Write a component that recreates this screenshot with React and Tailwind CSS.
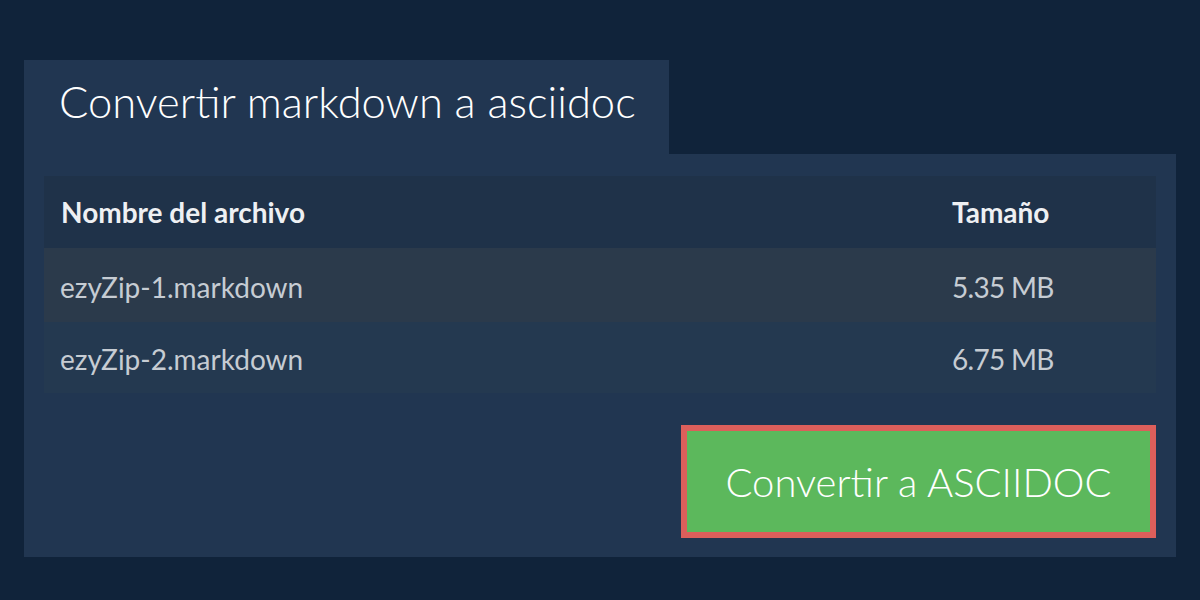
export default function App() {
  const files = [
    { name: 'ezyZip-1.markdown', size: '5.35 MB' },
    { name: 'ezyZip-2.markdown', size: '6.75 MB' },
  ];

  return (
    <div className="w-[1200px] h-[600px] bg-[#10233a] px-6 pt-[60px] font-['Lato','Liberation_Sans',sans-serif]">
      {/* Pestaña */}
      <div className="w-[645px] h-[94px] bg-[#213651] pl-[35px] pt-[11px]">
        <h1 className="text-[43.5px] font-light text-white leading-[60px]">
          Convertir markdown a asciidoc
        </h1>
      </div>

      {/* Panel */}
      <div className="w-[1152px] bg-[#213651] px-5 pt-[22px] pb-[19px]">
        <div className="w-full">
          <div className="flex h-[72px] items-center bg-[#1f3249] text-[28px] font-bold text-[#eef0f3]">
            <div className="flex-1 pl-[17px]">Nombre del archivo</div>
            <div className="w-[204px]">Tamaño</div>
          </div>
          {files.map((file, i) => (
            <div
              key={file.name}
              className={`flex items-center pt-[3px] text-[28px] text-[#c6ccd3] ${
                i === 0 ? 'h-[74px] bg-[#2b3a4b]' : 'h-[71px] bg-[#243950]'
              }`}
            >
              <div className="flex-1 pl-[16px]">{file.name}</div>
              <div className="w-[204px] tracking-[-0.7px]">{file.size}</div>
            </div>
          ))}
        </div>

        <div className="flex justify-end mt-[32px]">
          <button className="w-[475px] h-[113px] border-[6px] border-[#dc5f5b] bg-[#5cb85c] text-white text-[40px] font-light">
            Convertir a ASCIIDOC
          </button>
        </div>
      </div>
    </div>
  );
}
